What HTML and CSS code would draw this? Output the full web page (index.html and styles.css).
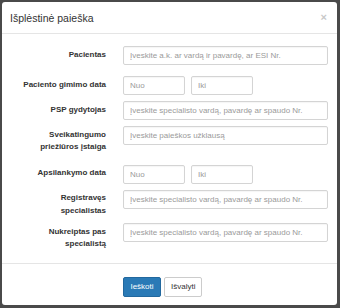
FILE: index.html
```
<!DOCTYPE html>
<html lang="lt">
<head>
    <meta charset="UTF-8">
    <meta name="viewport" content="width=device-width, initial-scale=1.0">
    <title>Išplėstinė paieška</title>
    <link rel="stylesheet" href="styles.css">
</head>
<body>
    <div class="modal">
        <!-- Header -->
        <div class="modal-header">
            <h4 class="modal-title">Išplėstinė paieška</h4>
            <span class="close">&times;</span>
        </div>

        <!-- Search form -->
        <form class="modal-body">
            <div class="form-row">
                <label for="patient">Pacientas</label>
                <input type="text" id="patient" placeholder="Įveskite a.k. ar vardą ir pavardę, ar ESI Nr.">
            </div>
            <div class="form-row date-row">
                <label>Paciento gimimo data</label>
                <div class="date-inputs">
                    <input type="text" placeholder="Nuo">
                    <input type="text" placeholder="Iki">
                </div>
            </div>
            <div class="form-row">
                <label for="psp">PSP gydytojas</label>
                <input type="text" id="psp" placeholder="Įveskite specialisto vardą, pavardę ar spaudo Nr.">
            </div>
            <div class="form-row">
                <label for="institution">Sveikatingumo priežiūros įstaiga</label>
                <input type="text" id="institution" placeholder="Įveskite paieškos užklausą">
            </div>
            <div class="form-row date-row">
                <label>Apsilankymo data</label>
                <div class="date-inputs">
                    <input type="text" placeholder="Nuo">
                    <input type="text" placeholder="Iki">
                </div>
            </div>
            <div class="form-row">
                <label for="registered">Registravęs specialistas</label>
                <input type="text" id="registered" placeholder="Įveskite specialisto vardą, pavardę ar spaudo Nr.">
            </div>
            <div class="form-row">
                <label for="referred">Nukreiptas pas specialistą</label>
                <input type="text" id="referred" placeholder="Įveskite specialisto vardą, pavardę ar spaudo Nr.">
            </div>
        </form>

        <!-- Footer -->
        <div class="modal-footer">
            <button type="button" class="btn btn-primary">Ieškoti</button>
            <button type="button" class="btn btn-default">Išvalyti</button>
        </div>
    </div>
</body>
</html>
```

FILE: styles.css
```
body {
    background-color: #4a4a4a; /* Backdrop */
    margin: 0;
    font-family: "Liberation Sans", Arial, sans-serif;
    color: #333;
}

.modal {
    background-color: #fff;
    width: 335px;
    height: 303px;
    margin: 2px 0 0 2px;
    border-radius: 3px;
    display: flex;
    flex-direction: column;
}

.modal-header {
    height: 31px;
    padding: 0 10px 0 8px;
    border-bottom: 1px solid #e5e5e5;
    display: flex;
    align-items: center;
    justify-content: space-between;
}

.modal-title {
    margin: 0;
    font-size: 10.5px;
    font-weight: normal;
    color: #333;
}

.close {
    font-size: 11px;
    font-weight: bold;
    color: #c8c8c8;
    line-height: 1;
}

.modal-body {
    margin: 0;
    padding: 12px 9px 12px 10px;
    display: flex;
    flex-direction: column;
    gap: 6px;
    border-bottom: 1px solid #e5e5e5;
}

.form-row {
    display: grid;
    grid-template-columns: 94px 205px;
    column-gap: 17px;
    align-items: start;
}

.date-row {
    margin-top: 5px;
}

label {
    text-align: right;
    font-size: 8px;
    font-weight: bold;
    line-height: 12.5px;
    padding-top: 2.5px;
    padding-left: 8px;
}

input[type="text"] {
    height: 19px;
    width: 100%;
    box-sizing: border-box;
    border: 1px solid #d4d4d4;
    border-radius: 2px;
    padding: 0 6px;
    font-family: "Liberation Sans", Arial, sans-serif;
    font-size: 8px;
    color: #555;
    box-shadow: inset 0 1px 1px rgba(0, 0, 0, 0.04);
}

input::placeholder {
    color: #9a9a9a;
}

.date-inputs {
    display: flex;
    gap: 6px;
}

.date-inputs input[type="text"] {
    width: 62px;
}

.modal-footer {
    padding: 13px 0 0 121px;
    display: flex;
    gap: 3px;
}

.btn {
    height: 20px;
    padding: 0 6px;
    font-family: "Liberation Sans", Arial, sans-serif;
    font-size: 8px;
    border-radius: 2px;
    cursor: pointer;
}

.btn-primary {
    width: 38px;
    background-color: #2a7ab6;
    border: 1px solid #22689e;
    color: #fff;
}

.btn-default {
    width: 38px;
    background-color: #fff;
    border: 1px solid #ccc;
    color: #333;
}
```
